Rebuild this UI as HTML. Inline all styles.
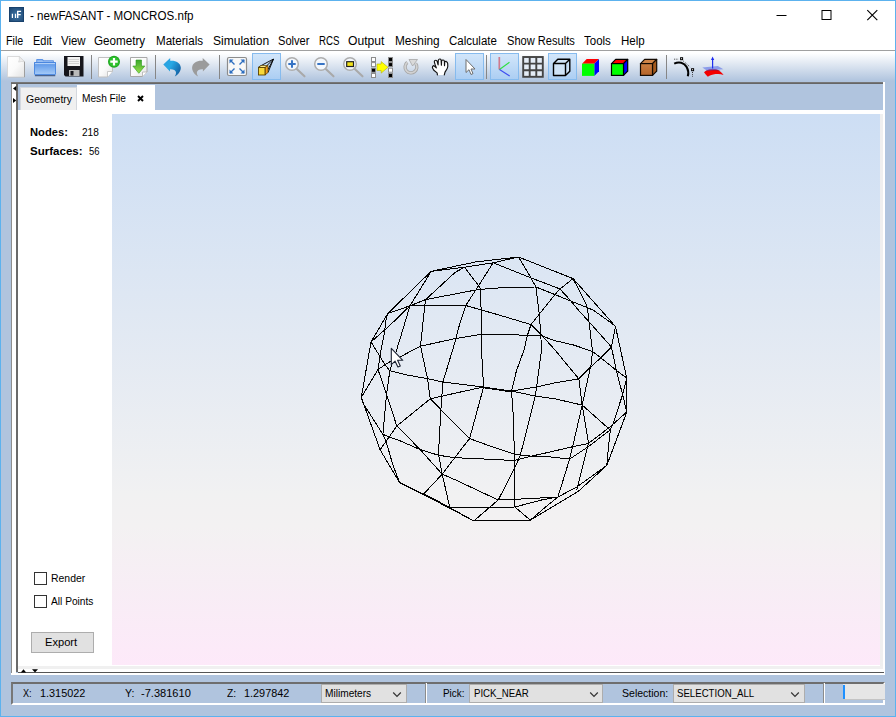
<!DOCTYPE html>
<html>
<head>
<meta charset="utf-8">
<title>newFASANT</title>
<style>
*{box-sizing:border-box;margin:0;padding:0}
html,body{width:896px;height:717px;overflow:hidden;background:#b0c4de}
body{font-family:"Liberation Sans",sans-serif;font-size:12px;color:#000;position:relative}
.abs{position:absolute}
.t{position:absolute;white-space:nowrap;transform-origin:0 0;display:block}
#win{position:absolute;left:0;top:0;width:896px;height:717px;border:1px solid #5cb2ee;background:#b0c4de}
#title{position:absolute;left:1px;top:1px;width:894px;height:30px;background:#fff}
#menubar{position:absolute;left:1px;top:31px;width:894px;height:19px;background:#fff}
#menuline{position:absolute;left:1px;top:50px;width:894px;height:1px;background:#a0a0a0}
#toolbar{position:absolute;left:1px;top:51px;width:894px;height:33px;background:linear-gradient(#ffffff 0px,#ffffff 2px,#b0c4de 30px,#b0c4de 33px)}
#toolline{position:absolute;left:11px;top:82px;width:872px;height:2px;background:linear-gradient(#7e7e7e,#5e5e5e)}
#rbevel{position:absolute;left:883px;top:82px;width:2px;height:593px;background:#fff}
#lgrey{position:absolute;left:11px;top:84px;width:1px;height:589px;background:#8e8e8e}
.tsep{position:absolute;top:55px;width:1px;height:24px;background:#868686}
.tsel{position:absolute;top:53px;height:27px;background:linear-gradient(#d2e6fa,#accef3);border:1px solid #86bbee}
.ic{position:absolute}
/* left splitter */
#split{position:absolute;left:12px;top:84px;width:4px;height:591px;background:#fff}
#splitb{position:absolute;left:16px;top:84px;width:2px;height:588px;background:#6a6a6a}
/* tabs */
#tabGeo{position:absolute;left:20px;top:87px;width:57px;height:23px;background:#f0f0f0;border:1px solid #d4d8de;border-bottom:none}
#tabMesh{position:absolute;left:77px;top:85px;width:78px;height:26px;background:#fff}
/* content */
#content{position:absolute;left:18px;top:110px;width:865px;height:562px;background:#fff}
#vgr{position:absolute;left:880px;top:114px;width:3px;height:555px;background:#efefef}
#vgb{position:absolute;left:18px;top:666px;width:865px;height:3px;background:#f0f0f0}
#view{position:absolute;left:112px;top:114px;width:768px;height:551px;background:linear-gradient(#cddef4 0%,#f1f1f2 69%,#f3f1f2 75%,#fde9f9 100%)}
#botline{position:absolute;left:18px;top:672px;width:866px;height:1px;background:#555}
#botwhite{position:absolute;left:11px;top:673px;width:874px;height:2px;background:#fff}
.chk{position:absolute;width:13px;height:13px;border:1px solid #333;background:#fff}
#export{position:absolute;left:31px;top:632px;width:63px;height:21px;background:#e1e1e1;border:1px solid #adadad}
/* status */
#status{position:absolute;left:11px;top:682px;width:874px;height:23px;background:#b0c4de;border-top:2px solid #6e6e6e;border-left:2px solid #777;box-shadow:inset 0 0 0 0 #000;border-bottom:2px solid #fff;border-right:2px solid #fff}
.combo{position:absolute;top:684px;height:19px;background:#e1e1e1;border:1px solid #adadad}
.sdiv{position:absolute;top:683px;width:2px;height:20px;border-left:1px solid #8c8c8c;border-right:1px solid #fff}
</style>
</head>
<body>
<div id="win"></div>
<div id="title">
  <svg class="abs" style="left:8px;top:6px" width="16" height="16" viewBox="9 7 16 16"><defs><radialGradient id="gic" cx="0.5" cy="0.55" r="0.65"><stop offset="0" stop-color="#3f76a6"/><stop offset="1" stop-color="#1c4672"/></radialGradient></defs><rect x="9" y="7" width="15" height="15" fill="url(#gic)"/><rect x="9.400" y="7.400" width="14.200" height="14.200" fill="none" stroke="#173f69" stroke-width="0.800"/><path d="M12.400 13.800v4.200M15.500 13.800v4.200" stroke="#fff" stroke-width="1.200"/><path d="M17.700 18v-6.600h3.400M17.700 14.600h3" stroke="#fff" stroke-width="1.400" fill="none"/></svg>
  <svg class="abs" style="left:774.5px;top:0" width="117" height="30" viewBox="0 0 117 30"><path d="M0.5 14.5h10" stroke="#000" stroke-width="1"/><rect x="46" y="9.500" width="9" height="9" fill="none" stroke="#000" stroke-width="1"/><path d="M91.300 9.100l10 10M101.300 9.100l-10 10" stroke="#000" stroke-width="1.150"/></svg>
</div>
<div id="menubar"></div>
<div id="menuline"></div>
<div id="toolbar"></div>
<div id="toolline"></div><div id="rbevel"></div><div id="lgrey"></div>
<div class="tsel" style="left:252px;width:29px"></div>
<div class="tsel" style="left:455px;width:29px"></div>
<div class="tsel" style="left:490px;width:29px"></div>
<div class="tsel" style="left:548px;width:29px"></div>
<div class="tsep" style="left:91px"></div><div class="tsep" style="left:155px"></div><div class="tsep" style="left:219px"></div><div class="tsep" style="left:486px"></div><div class="tsep" style="left:666px"></div>
<svg class="abs" style="left:0;top:50px" width="896" height="36" viewBox="0 50 896 36">
<defs>
<linearGradient id="gpage" x1="0" y1="0" x2="1" y2="1"><stop offset="0" stop-color="#ffffff"/><stop offset="0.5" stop-color="#fafafa"/><stop offset="1" stop-color="#e2e2e2"/></linearGradient>
<linearGradient id="gfold" x1="0" y1="0" x2="0" y2="1"><stop offset="0" stop-color="#528fe6"/><stop offset="0.500" stop-color="#7fb0f0"/><stop offset="1" stop-color="#a8cdf9"/></linearGradient>
<linearGradient id="ggreen" x1="0" y1="0" x2="0" y2="1"><stop offset="0" stop-color="#3aa82a"/><stop offset="1" stop-color="#9be04a"/></linearGradient>
<linearGradient id="gundo" x1="0" y1="0.200" x2="1" y2="0.800"><stop offset="0" stop-color="#2b9fe0"/><stop offset="0.400" stop-color="#27a8e4"/><stop offset="1" stop-color="#135a9e"/></linearGradient>
<linearGradient id="gbrown" x1="0" y1="0" x2="0" y2="1"><stop offset="0" stop-color="#cc7f42"/><stop offset="1" stop-color="#b4642a"/></linearGradient>
</defs>
<!-- new page -->
<path d="M8 57h11.300l5.200 5v15h-16.500z" fill="#9a9a9a" opacity="0.550" transform="translate(0.500,0.600)"/>
<path d="M7.500 56.500h11.700l5.300 5.200v15.300h-17z" fill="url(#gpage)" stroke="#d2d2d2" stroke-width="0.800"/>
<path d="M19.200 56.500q.6 3.400-.6 5.600q2.600-1 5.900-.4z" fill="#ededed" stroke="#c8c8c8" stroke-width="0.500"/>
<path d="M24.500 61.700v15.300" stroke="#6a6a6a" stroke-width="0.700" opacity="0.700"/>
<!-- folder -->
<path d="M36.200 59.800q0-.8.800-.8h5.600l1.200 1.300h9.400q.7 0 .7.700v2h-17.700z" fill="#5b93e6"/>
<path d="M37.200 60.200h5l1 1h9.700v1.500h-15.700z" fill="#9cc0f2"/>
<rect x="34.800" y="75" width="20.600" height="1.300" rx="0.600" fill="#34507e" opacity="0.850"/>
<path d="M34 62.700q0-.7.700-.7h20.600q.7 0 .7.700v11.600q0 .7-.7.700h-20.600q-.7 0-.7-.7z" fill="url(#gfold)"/>
<path d="M35 63.600h20" stroke="#c4dcfb" stroke-width="0.900"/>
<rect x="34.500" y="62.500" width="21" height="12" rx="0.500" fill="none" stroke="#4a86de" stroke-width="0.900"/>
<!-- floppy -->
<path d="M64 56h19.500v20.500h-18l-1.500-1.500z" fill="#16161c"/>
<rect x="67.500" y="57" width="12.500" height="9" fill="#f2f2f2"/>
<path d="M68.500 59.500h10.500M68.500 61.500h10.500M68.500 63.500h10.500" stroke="#c8c8c8" stroke-width="0.800"/>
<rect x="69" y="70" width="10.500" height="6" fill="#b9b9b9"/>
<rect x="70.500" y="71" width="3" height="4.500" fill="#16161c"/>
<!-- new+ page -->
<path d="M98.500 57.500h14v14l-5 5.500h-9z" fill="url(#gpage)" stroke="#c0c0c0" stroke-width="1"/>
<path d="M107.500 77v-5.500h5" fill="#fff" stroke="#bdbdbd" stroke-width="0.800"/>
<circle cx="114" cy="61.700" r="6" fill="#1fa51f"/><circle cx="114" cy="61.700" r="5" fill="#2cc02c"/>
<path d="M114 58v7.400M110.300 61.700h7.400" stroke="#fff" stroke-width="2.200"/>
<!-- import page -->
<path d="M130.500 57.500h16.500v14.500l-4.500 4.500h-12z" fill="url(#gpage)" stroke="#a8a8a8" stroke-width="1"/>
<path d="M142.500 76.500v-4.500h4.500" fill="#fff" stroke="#b0b0b0" stroke-width="0.800"/>
<path d="M136 60h5.500v6h3.300l-6 7.300l-6-7.300h3.200z" fill="url(#ggreen)" stroke="#2f9a22" stroke-width="0.600"/>
<!-- undo -->
<path d="M163.300 64.600L170.200 58L170.200 60.800C175.500 60.300 180.300 62.500 180.800 67.500C181 71 178.500 74.500 174.800 76.600C176.500 73.500 176.600 71.300 174.300 69.900C173.200 69.300 171.700 69.100 170 69.200L170 71.600Z" fill="url(#gundo)"/>
<!-- redo -->
<path d="M163.300 64.600L170.200 58L170.200 60.800C175.500 60.300 180.300 62.500 180.800 67.500C181 71 178.500 74.500 174.800 76.600C176.500 73.500 176.600 71.300 174.300 69.900C173.200 69.300 171.700 69.100 170 69.200L170 71.600Z" fill="#9b9b9b" transform="translate(372.900,0) scale(-1,1)"/>
<!-- fit -->
<rect x="227.500" y="57.500" width="19" height="18" rx="1.500" fill="#f8f8f8" stroke="#8c8c8c" stroke-width="1.200"/>
<g fill="#2e6fc0" stroke="#2e6fc0" stroke-width="1.400" stroke-linecap="butt">
<path d="M230 60l4.500 4.500M244 60l-4.500 4.500M230 73l4.500-4.500M244 73l-4.500-4.500" fill="none"/>
<path d="M229.500 59.500h4l-4 4zM244.500 59.500h-4l4 4zM229.500 73.500h4l-4-4zM244.500 73.500h-4l4-4z" stroke="none"/>
</g>
<!-- perspective -->
<path d="M258.500 67l15-8M265 67.500l8.500-8.500M268 72.500l5.500-13.500M265 75l8.500-16" stroke="#000" stroke-width="0.900" fill="none"/>
<path d="M258.500 67.500l2.500-2h7l-3 2z" fill="#fbe98a" stroke="#5a4200" stroke-width="0.700" stroke-linejoin="round"/>
<path d="M265 67.500l3-2v7l-3 2.500z" fill="#f09a1a" stroke="#5a4200" stroke-width="0.700" stroke-linejoin="round"/>
<rect x="258.500" y="67.500" width="6.500" height="7.500" fill="#f7d93a" stroke="#5a4200" stroke-width="0.900"/>
<!-- zoom in -->
<path d="M296.8 69l7.700 7.300" stroke="#a9a9a9" stroke-width="2.100" stroke-linecap="round"/><circle cx="292" cy="64" r="6.300" fill="#f3f7fc" stroke="#adadad" stroke-width="1.500"/>
<path d="M288.300 64h7.400M292 60.300v7.400" stroke="#3673c4" stroke-width="2"/>
<!-- zoom out -->
<path d="M325.8 69l7.700 7.300" stroke="#a9a9a9" stroke-width="2.100" stroke-linecap="round"/><circle cx="321" cy="64" r="6.300" fill="#f3f7fc" stroke="#adadad" stroke-width="1.500"/>
<path d="M317.300 64h7.400" stroke="#3673c4" stroke-width="2"/>
<!-- zoom box -->
<path d="M354.8 69l7.700 7.300" stroke="#a9a9a9" stroke-width="2.100" stroke-linecap="round"/><circle cx="350" cy="64" r="6.300" fill="#f3f7fc" stroke="#adadad" stroke-width="1.500"/>
<rect x="346.700" y="61.700" width="6.800" height="4.800" fill="#f2e21a" stroke="#222" stroke-width="1.200"/>
<!-- select invert -->
<g stroke="#8c8c8c" stroke-width="1">
<rect x="371.500" y="57.500" width="4" height="4" fill="#fff"/><rect x="371.500" y="62.600" width="4" height="4" fill="#fff"/><rect x="371.500" y="68.200" width="4" height="4" fill="#000"/><rect x="371.500" y="73.500" width="4" height="4" fill="#fff"/>
<rect x="388.500" y="57.500" width="4" height="4" fill="#000"/><rect x="388.500" y="62.600" width="4" height="4" fill="#000"/><rect x="388.500" y="68.200" width="4" height="4" fill="#fff"/><rect x="388.500" y="73.500" width="4" height="4" fill="#000"/>
</g>
<path d="M377 64h4.200v-2.400l6.800 5.700l-6.800 5.800v-2.600h-4.200z" fill="#ffff00" stroke="#b4b400" stroke-width="0.600"/>
<!-- rotate -->
<path d="M407.300 62.400A5.900 5.900 0 1 0 415.650 63.400" fill="none" stroke="#a6a6a6" stroke-width="3.300"/>
<path d="M407.300 62.400A5.900 5.900 0 1 0 415.650 63.400" fill="none" stroke="#d2d2d2" stroke-width="1.700"/>
<path d="M409 59.500h8.500l-4.900 6.500z" fill="#dadada" stroke="#a6a6a6" stroke-width="0.800"/>
<!-- hand -->
<path d="M437.400 74.900L437.100 72.900L433.800 70.300L432.400 67.800Q432.100 66.200 433.800 65.600L436.300 67.800L435.200 64.900L434.300 61.800Q434.300 60.200 435.800 60.200Q436.900 60.200 437.200 61.500L438.100 64.900L438.300 60.300Q438.600 59 439.700 59Q440.900 59 441.100 60L441.400 65.200L441.600 60.800Q442 59.900 443.100 60Q444.300 60.200 444.400 61.300L444.500 65.600L444.700 62Q445.300 61.200 446.200 61.400Q447.500 62 447.700 63.500L447.800 66.300Q447.600 68 446.800 69.200L445 72.100L444.300 74.900" fill="#fff" stroke="#111" stroke-width="1.150" stroke-linejoin="round" stroke-linecap="round"/>
<!-- pointer -->
<path d="M466 59.500v13l3-2.800l2 4.800l2-.9l-2-4.600h4z" fill="#fff" stroke="#6e6e6e" stroke-width="1" stroke-linejoin="round"/>
<!-- axes -->
<path d="M499.300 69.500v-12.500" stroke="#cf7a8e" stroke-width="1.700"/>
<path d="M499.500 69.500l10-7.200" stroke="#2fe040" stroke-width="1.100"/>
<path d="M499.500 69.500l10.200 6.600" stroke="#3d4df0" stroke-width="1.200"/>
<!-- grid -->
<rect x="523.200" y="57" width="19.600" height="19.800" fill="#e4ecf6" stroke="#444" stroke-width="1.900"/>
<path d="M529.700 57v20M536.300 57v20M523 63.600h20M523 70.200h20" stroke="#444" stroke-width="1.900"/>
<!-- wire cube -->
<path d="M553.500 63.500h12v12h-12zM553.500 63.500l4.300-4.300h12l-4.300 4.300M569.800 59.200v12l-4.300 4.300" fill="#cfe3f7" stroke="#000" stroke-width="1.400" stroke-linejoin="round"/>
<!-- rgb cube 1 -->
<path d="M582 63.700l4.700-4.700h12.300l-4.700 4.700z" fill="#f00"/><path d="M594.300 63.700l4.700-4.700v12.200l-4.700 4.700z" fill="#00f"/><rect x="582" y="63.700" width="12.300" height="12.200" fill="#0f0"/>
<!-- rgb cube 2 -->
<path d="M611.500 63.600l4.200-4.200h12l-4.200 4.200z" fill="#f00" stroke="#000" stroke-width="1.200" stroke-linejoin="round"/><path d="M623.500 63.600l4.200-4.200v11.800l-4.200 4.200z" fill="#00f" stroke="#000" stroke-width="1.200" stroke-linejoin="round"/><rect x="611.500" y="63.600" width="12" height="11.800" fill="#0f0" stroke="#000" stroke-width="1.200"/>
<!-- brown cube -->
<path d="M640.500 63.600l4.200-4.200h12l-4.200 4.200z" fill="#cf8447" stroke="#140a02" stroke-width="1.200" stroke-linejoin="round"/><path d="M652.500 63.600l4.200-4.200v11.800l-4.200 4.200z" fill="#a35a1e" stroke="#140a02" stroke-width="1.200" stroke-linejoin="round"/><rect x="640.500" y="63.600" width="12" height="11.800" fill="url(#gbrown)" stroke="#140a02" stroke-width="1.200"/>
<!-- arc -->
<path d="M674.200 63.600C679 61.300 684 62.500 686.500 66.800C688.200 69.800 688.800 73 687.800 76.200" fill="none" stroke="#000" stroke-width="2.100"/>
<path d="M674.200 59.200h4.500M683.300 61l6.800 6M692.500 72v5" fill="none" stroke="#222" stroke-width="0.900" stroke-dasharray="1 1.200"/>
<rect x="680.600" y="57.700" width="2" height="2" fill="#fff" stroke="#000" stroke-width="1"/><rect x="691.600" y="68.700" width="2" height="2" fill="#fff" stroke="#000" stroke-width="1"/>
<!-- surface -->
<path d="M704 72.200C706.500 69.800 710 68.800 713 68.900C716.500 69 720.500 70.300 723.600 75C721 73.800 718 73.700 715.500 74.100C712.500 74.600 710 75.600 707.800 76.800C706.300 75.300 705 73.700 704 72.200z" fill="#f40000"/>
<path d="M705 71.500C708 69.500 711 68.800 713.500 68.900C716 69 719 69.800 721 71.300C717 70.300 710 70.300 705 71.500z" fill="#8a1040" opacity="0.800"/>
<path d="M702.300 67.600l15.500-1.500l5.600 3.200l-16.600 1.100z" fill="#5f72e6" fill-opacity="0.620"/>
<path d="M712.600 68.600v-9.500" stroke="#2030f0" stroke-width="1.200"/><path d="M712.600 56.600l1.600 3.300h-3.200z" fill="#1a28f0"/>
</svg>

<div id="split"></div><div id="splitb"></div>
<svg class="abs" style="left:12px;top:84px" width="5" height="24" viewBox="0 0 5 24"><path d="M4.200 2v5l-3.200-2.500z" fill="#000"/><path d="M1 14v5l3.200-2.500z" fill="#000"/></svg>
<div id="content"></div>
<div id="tabGeo"></div>
<div id="tabMesh"></div>
<svg class="abs" style="left:136.500px;top:94.500px" width="7" height="7" viewBox="0 0 7 7"><path d="M1 1l5 5M6 1l-5 5" stroke="#000" stroke-width="1.900"/></svg>
<div id="vgr"></div><div id="vgb"></div><div id="view"></div>
<svg class="abs" style="left:112px;top:114px" width="769" height="552" viewBox="112 114 769 552" shape-rendering="crispEdges">
<g fill="none" stroke="#000" stroke-width="1">
<polyline points="518.5,257.0 573.1,278.6 615.5,326.5 626.7,378.0 626.8,412.0 606.8,465.4 578.0,491.6 530.3,520.2 473.8,520.9 423.3,494.4 399.6,482.5 380.1,449.8 361.3,397.4 371.0,342.0 387.8,313.5 431.2,271.3 476.0,261.9 518.5,257.0"/>
<polyline points="431.2,271.3 464.4,267.2 493.1,262.8 518.5,257.0"/>
<polyline points="606.8,465.4 576.8,487.0 557.9,497.0 545.0,507.5 530.3,520.2"/>
<polyline points="399.6,482.5 436.0,500.1 473.8,520.9"/>
<polyline points="361.3,397.4 363.4,403.7 382.9,434.4 385.7,440.0 392.7,464.4 399.6,482.5"/>
<polyline points="431.2,271.3 410.0,305.8 401.2,335.0 396.2,351.2 389.8,370.8 386.4,396.0 382.9,434.4"/>
<polyline points="387.8,313.5 410.0,305.8 425.6,299.6 474.7,290.2 480.8,289.3 508.0,287.3 535.9,287.0 555.0,294.6 593.0,310.0 611.0,322.7 615.5,326.5"/>
<polyline points="410.0,305.8 465.7,305.5 500.0,315.3 531.0,324.6 541.5,335.0 555.0,350.0 578.8,378.8 582.2,405.1 588.5,443.4 576.8,490.3"/>
<polyline points="371.0,342.0 389.9,325.3 410.0,305.8"/>
<polyline points="425.6,299.6 455.0,272.5 464.4,267.2 478.6,285.7 480.8,289.3"/>
<polyline points="425.6,299.6 424.7,306.0 422.2,330.0 420.5,346.0 427.5,378.6 430.3,398.8"/>
<polyline points="387.8,313.5 386.4,317.0 384.3,333.7 381.0,350.0 378.0,369.5 387.1,396.0 396.8,426.0"/>
<polyline points="371.0,342.0 376.0,350.0 381.1,358.4 385.0,364.6 389.8,370.8 406.8,375.0 427.5,378.6 442.9,382.1 455.0,383.5 483.6,387.0"/>
<polyline points="361.3,397.4 378.0,369.5 390.6,361.2 400.6,356.8 412.9,350.0 420.5,346.2 455.0,338.6 480.8,334.4 524.7,335.1 541.5,335.8 555.0,340.7 573.9,345.1 592.5,351.5 600.8,357.8 615.9,370.0 626.7,378.0"/>
<polyline points="493.1,262.8 478.6,285.7 465.7,305.5 457.9,330.0 455.0,342.0 452.6,350.0 442.9,382.0 440.8,411.0 438.7,450.0 438.7,455.3 442.2,474.2 449.8,507.6"/>
<polyline points="480.8,289.3 481.5,350.0 483.6,387.0 469.6,438.6 460.6,450.0 455.0,457.4 442.2,474.2 423.3,494.4"/>
<polyline points="518.5,257.0 531.0,277.9 535.9,287.0 539.4,315.5 540.8,335.0 541.5,350.0 536.6,387.0 535.2,396.0 526.8,430.0 520.1,455.9 514.3,468.5 503.4,490.0 498.2,500.0 473.8,520.9"/>
<polyline points="493.1,262.8 531.0,277.9 555.0,287.0 559.9,289.0 569.0,298.8 578.3,310.0 589.0,321.7 611.5,347.1 600.8,357.8 589.0,368.6 578.8,378.8"/>
<polyline points="531.0,324.6 555.0,294.6 559.9,289.0 573.1,278.6"/>
<polyline points="531.0,324.6 527.5,335.0 524.0,350.0 516.4,371.0 511.5,391.1 513.6,420.0 514.3,455.0 514.7,490.0 515.0,507.0 530.3,520.2"/>
<polyline points="573.1,278.6 586.4,305.0 587.6,310.0 589.0,321.7 592.5,351.5 591.0,364.7 587.6,380.0 582.2,405.1 574.2,440.0 569.6,459.1 557.9,497.0"/>
<polyline points="615.5,326.5 611.5,347.1 615.9,368.6 618.8,380.0 622.6,394.6 626.8,412.0"/>
<polyline points="626.7,378.0 622.6,394.6 613.6,422.5 610.3,430.0 608.7,445.0 606.8,465.4"/>
<polyline points="626.8,412.0 610.3,426.7 588.5,443.4 572.4,446.8 550.0,452.0 532.0,456.0 514.3,460.5 490.0,459.3 455.0,457.7 438.7,455.3 420.5,449.7 398.2,440.0 389.9,437.2 382.9,434.4"/>
<polyline points="610.3,430.0 588.0,446.8 569.6,459.1 546.7,456.5 532.0,456.2 515.0,454.3 490.0,446.0 469.6,438.6 455.0,424.0 430.3,398.8 396.8,426.0 380.1,449.8"/>
<polyline points="396.8,426.0 410.8,440.0 420.5,450.0 442.2,474.2 455.0,479.7 498.2,500.0 515.0,499.3 540.0,498.0 557.9,497.0"/>
<polyline points="430.3,398.8 455.0,393.2 483.6,387.0"/>
<polyline points="483.6,387.0 511.5,391.1"/>
<polyline points="483.6,387.8 511.5,391.9"/>
<polyline points="511.5,391.1 536.6,387.0 555.0,382.8 578.8,378.8"/>
<polyline points="511.5,391.1 535.2,396.0 555.0,398.8 582.2,405.1 610.3,430.0"/>
<polyline points="449.8,507.6 515.0,507.0 541.5,500.0 557.9,497.0"/>
</g>
<path shape-rendering="geometricPrecision" d="M391.300 348.300v16.400l3.800-3.500l2.800 5.800l2.400-1.100l-2.700-5.600h5.200z" fill="#fff" stroke="#1a2030" stroke-width="1.100" stroke-linejoin="round"/>
</svg>
<div class="chk" style="left:34px;top:572px"></div>
<div class="chk" style="left:34px;top:595px"></div>
<div id="export"></div>
<div id="botline"></div><div id="botwhite"></div>
<svg class="abs" style="left:19px;top:668px" width="22" height="5" viewBox="0 0 22 5"><path d="M1.800 4.500h5.400l-2.700-3.300z" fill="#000"/><path d="M13 1.200h6l-3 3.300z" fill="#000"/></svg>
<div id="status"></div>
<div class="combo" style="left:321px;width:86px"></div>
<svg class="abs" style="left:391px;top:691px" width="12" height="8" viewBox="0 0 12 8"><path d="M2.200 1.500l3.800 3.800l3.800-3.800" fill="none" stroke="#333" stroke-width="1.200"/></svg>
<div class="sdiv" style="left:425px"></div>
<div class="combo" style="left:469px;width:134px"></div>
<svg class="abs" style="left:588px;top:691px" width="12" height="8" viewBox="0 0 12 8"><path d="M2.200 1.500l3.800 3.800l3.800-3.800" fill="none" stroke="#333" stroke-width="1.200"/></svg>
<div class="combo" style="left:673px;width:132px"></div>
<svg class="abs" style="left:789px;top:691px" width="12" height="8" viewBox="0 0 12 8"><path d="M2.200 1.500l3.800 3.800l3.800-3.800" fill="none" stroke="#333" stroke-width="1.200"/></svg>
<div class="sdiv" style="left:823px"></div>
<div class="abs" style="left:843px;top:684px;width:42px;height:16px;background:#e6e6e6;border-bottom:1px solid #c4c4c4"></div>
<div class="abs" style="left:843px;top:685px;width:2px;height:14px;background:#1e90ff"></div>

<span class="t" style="left:29.80px;top:4.24px;font-size:12px;line-height:24px;transform:scaleX(0.9670);">- newFASANT - MONCROS.nfp</span>
<span class="t" style="left:5.50px;top:29.24px;font-size:12px;line-height:24px;transform:scaleX(0.8900);">File</span>
<span class="t" style="left:32.50px;top:29.24px;font-size:12px;line-height:24px;transform:scaleX(0.9136);">Edit</span>
<span class="t" style="left:61.00px;top:29.24px;font-size:12px;line-height:24px;transform:scaleX(0.9492);">View</span>
<span class="t" style="left:94.30px;top:29.24px;font-size:12px;line-height:24px;transform:scaleX(0.9719);">Geometry</span>
<span class="t" style="left:155.50px;top:29.24px;font-size:12px;line-height:24px;transform:scaleX(0.9655);">Materials</span>
<span class="t" style="left:212.50px;top:29.24px;font-size:12px;line-height:24px;transform:scaleX(1.0026);">Simulation</span>
<span class="t" style="left:277.50px;top:29.24px;font-size:12px;line-height:24px;transform:scaleX(0.9260);">Solver</span>
<span class="t" style="left:318.50px;top:29.24px;font-size:12px;line-height:24px;transform:scaleX(0.8093);">RCS</span>
<span class="t" style="left:347.50px;top:29.24px;font-size:12px;line-height:24px;transform:scaleX(1.0085);">Output</span>
<span class="t" style="left:395.10px;top:29.24px;font-size:12px;line-height:24px;transform:scaleX(0.9847);">Meshing</span>
<span class="t" style="left:449.40px;top:29.24px;font-size:12px;line-height:24px;transform:scaleX(0.9572);">Calculate</span>
<span class="t" style="left:506.60px;top:29.24px;font-size:12px;line-height:24px;transform:scaleX(0.9241);">Show Results</span>
<span class="t" style="left:583.50px;top:29.24px;font-size:12px;line-height:24px;transform:scaleX(0.9567);">Tools</span>
<span class="t" style="left:620.50px;top:29.24px;font-size:12px;line-height:24px;transform:scaleX(0.9638);">Help</span>
<span class="t" style="left:25.70px;top:87.58px;font-size:11.3px;line-height:23px;transform:scaleX(0.9290);">Geometry</span>
<span class="t" style="left:82.30px;top:86.88px;font-size:11.3px;line-height:23px;transform:scaleX(0.8976);">Mesh File</span>
<span class="t" style="left:30.00px;top:120.78px;font-size:11.3px;line-height:23px;transform:scaleX(0.9887);font-weight:bold;">Nodes:</span>
<span class="t" style="left:82.30px;top:120.78px;font-size:11.3px;line-height:23px;transform:scaleX(0.8941);">218</span>
<span class="t" style="left:30.00px;top:140.38px;font-size:11.3px;line-height:23px;transform:scaleX(1.0212);font-weight:bold;">Surfaces:</span>
<span class="t" style="left:88.60px;top:140.38px;font-size:11.3px;line-height:23px;transform:scaleX(0.8386);">56</span>
<span class="t" style="left:50.50px;top:567.38px;font-size:11.3px;line-height:23px;transform:scaleX(0.9252);">Render</span>
<span class="t" style="left:50.50px;top:589.88px;font-size:11.3px;line-height:23px;transform:scaleX(0.9011);">All Points</span>
<span class="t" style="left:45.00px;top:631.18px;font-size:11.3px;line-height:23px;transform:scaleX(0.9848);">Export</span>
<span class="t" style="left:22.50px;top:681.98px;font-size:11.3px;line-height:23px;transform:scaleX(0.8068);">X:</span>
<span class="t" style="left:40.00px;top:681.98px;font-size:11.3px;line-height:23px;transform:scaleX(0.9608);">1.315022</span>
<span class="t" style="left:124.50px;top:681.98px;font-size:11.3px;line-height:23px;transform:scaleX(0.9333);">Y:</span>
<span class="t" style="left:141.00px;top:681.98px;font-size:11.3px;line-height:23px;transform:scaleX(0.9783);">-7.381610</span>
<span class="t" style="left:227.00px;top:681.98px;font-size:11.3px;line-height:23px;transform:scaleX(0.9090);">Z:</span>
<span class="t" style="left:243.50px;top:681.98px;font-size:11.3px;line-height:23px;transform:scaleX(0.9608);">1.297842</span>
<span class="t" style="left:324.50px;top:681.98px;font-size:11.3px;line-height:23px;transform:scaleX(0.8974);">Milimeters</span>
<span class="t" style="left:442.60px;top:681.98px;font-size:11.3px;line-height:23px;transform:scaleX(0.8792);">Pick:</span>
<span class="t" style="left:473.50px;top:681.98px;font-size:11.3px;line-height:23px;transform:scaleX(0.8532);">PICK_NEAR</span>
<span class="t" style="left:621.90px;top:681.98px;font-size:11.3px;line-height:23px;transform:scaleX(0.9318);">Selection:</span>
<span class="t" style="left:677.00px;top:681.98px;font-size:11.3px;line-height:23px;transform:scaleX(0.8532);">SELECTION_ALL</span>
</body>
</html>
